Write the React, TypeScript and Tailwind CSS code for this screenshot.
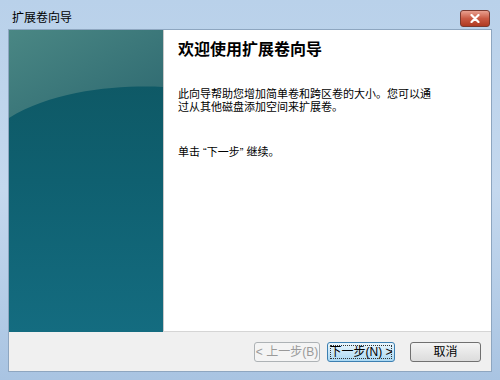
import React from 'react';

const FONT = { fontFamily: '"Liberation Sans", "Noto Sans CJK SC", sans-serif' };

function SidePanel() {
  // 侧边装饰：渐变底色 + 顶部弧形高光
  return (
    <svg width="154" height="302" viewBox="0 0 154 302" className="block">
      <defs>
        <linearGradient id="base" x1="0" y1="0" x2="0" y2="1">
          <stop offset="0" stopColor="#0e5560" />
          <stop offset="0.5" stopColor="#0f6070" />
          <stop offset="1" stopColor="#146c80" />
        </linearGradient>
        <linearGradient id="hl" x1="0" y1="0" x2="1" y2="1">
          <stop offset="0" stopColor="#4a8784" />
          <stop offset="1" stopColor="#2d6870" />
        </linearGradient>
      </defs>
      <rect width="154" height="302" fill="url(#base)" />
      <path d="M0 0 H154 V57 C110 55 45 60 0 88 Z" fill="url(#hl)" />
    </svg>
  );
}

function Btn({ children, focus, disabled }: { children: React.ReactNode; focus?: boolean; disabled?: boolean }) {
  let cls = 'border-[#707070] bg-gradient-to-b from-[#f4f4f4] to-[#dcdcdc] text-black';
  if (focus) cls = 'border-[#3c7fb1] bg-gradient-to-b from-[#eaf6fd] to-[#a9d8f3] text-black outline outline-1 outline-dotted outline-[#333] -outline-offset-4';
  if (disabled) cls = 'border-[#adb2b5] bg-[#f4f4f4] text-[#9a9a9a]';
  return (
    <button
      className={'w-full h-[20px] rounded-[3px] border text-[12px] leading-none flex items-center justify-center ' + cls}
      style={FONT}
    >
      {children}
    </button>
  );
}

export default function App() {
  return (
    <div className="w-[500px] h-[380px] bg-gradient-to-b from-[#b9d1ea] via-[#c4d8ee] to-[#a9c4e2] px-[8px] pb-[8px] flex flex-col" style={FONT}>
      {/* 标题栏 */}
      <div className="h-[29px] flex items-start justify-between pt-[10px]">
        <span className="text-[12px] leading-[16px] text-black pl-[4px]">扩展卷向导</span>
        <div className="w-[30px] h-[17px] mr-[2px] rounded-[3px] border border-[#7a3a30] bg-gradient-to-b from-[#e8a090] via-[#c95a44] to-[#b03a22] flex items-center justify-center">
          <svg width="10" height="9" viewBox="0 0 10 9">
            <path d="M1.5 1 L8.5 8 M8.5 1 L1.5 8" stroke="#fff" strokeWidth="2.2" strokeLinecap="round" />
          </svg>
        </div>
      </div>

      {/* 客户区 */}
      <div className="flex-1 flex flex-col bg-[#f0f0f0] border border-[#8ea6c0]">
        <div className="flex h-[302px] bg-white border-b border-[#d5d5d5]">
          <SidePanel />
          <div className="flex-1 pl-[14px] pt-[9px] border-l border-[#c9c9c9]">
            <h1 className="text-[16px] font-bold text-black leading-[22px]">欢迎使用扩展卷向导</h1>
            <p className="mt-[27px] text-[11px] leading-[13px] text-black">
              此向导帮助您增加简单卷和跨区卷的大小。您可以通
              <br />
              过从其他磁盘添加空间来扩展卷。
            </p>
            <p className="mt-[31px] text-[11px] leading-[14px] text-black">单击 “下一步” 继续。</p>
          </div>
        </div>
        <div className="flex-1 flex items-center justify-end pr-[10px]">
          <div className="w-[66px]">
            <Btn disabled>&lt; 上一步(B)</Btn>
          </div>
          <div className="w-[68px] ml-[7px]">
            <Btn focus>下一步(N) &gt;</Btn>
          </div>
          <div className="w-[71px] ml-[15px]">
            <Btn>取消</Btn>
          </div>
        </div>
      </div>
    </div>
  );
}
